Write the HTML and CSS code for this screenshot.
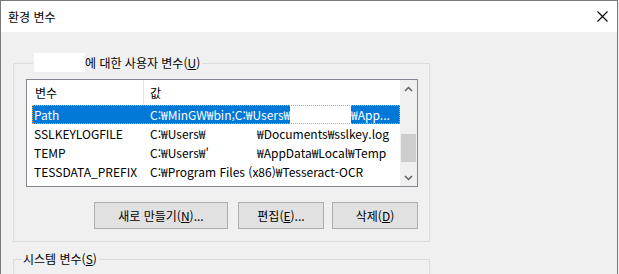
FILE: index.html
```html
<!DOCTYPE html>
<html lang="ko">
<head>
  <meta charset="UTF-8" />
  <title>환경 변수</title>
  <link rel="stylesheet" href="styles.css">
</head>
<body>

<div class="window">
  <div class="titlebar">
    <span class="title">환경 변수</span>
    <svg class="close" width="11" height="11" viewBox="0 0 11 11">
      <path d="M0.5 0.5L10.5 10.5M10.5 0.5L0.5 10.5" stroke="#000" stroke-width="1.1" fill="none"/>
    </svg>
  </div>

  <div class="content">
    <!-- 사용자 변수 -->
    <div class="group user">
      <div class="group-title"><span class="redact"></span><span>에 대한 사용자 변수(<u>U</u>)</span></div>

      <div class="listbox">
        <div class="list">
          <div class="list-head">
            <div class="head-name">변수</div>
            <div class="head-value">값</div>
          </div>
          <div class="row selected">
            <div class="name">Path</div>
            <div class="value fill"><span>C:₩MinGW₩bin;C:₩Users₩</span><span class="redact-row"></span><span class="tail">₩App...</span></div>
          </div>
          <div class="row">
            <div class="name">SSLKEYLOGFILE</div>
            <div class="value"><span class="part">C:₩Users₩</span><span>₩Documents₩sslkey.log</span></div>
          </div>
          <div class="row">
            <div class="name">TEMP</div>
            <div class="value"><span class="part">C:₩Users₩'</span><span>₩AppData₩Local₩Temp</span></div>
          </div>
          <div class="row">
            <div class="name">TESSDATA_PREFIX</div>
            <div class="value">C:₩Program Files (x86)₩Tesseract-OCR</div>
          </div>
        </div>
        <div class="scrollbar">
          <div class="sb-btn">
            <svg width="9" height="6" viewBox="0 0 9 6"><path d="M1 5L4.5 1.5L8 5" stroke="#606060" stroke-width="1.5" fill="none"/></svg>
          </div>
          <div class="sb-track"><div class="sb-thumb"></div></div>
          <div class="sb-btn">
            <svg width="9" height="6" viewBox="0 0 9 6"><path d="M1 1L4.5 4.5L8 1" stroke="#606060" stroke-width="1.5" fill="none"/></svg>
          </div>
        </div>
      </div>

      <div class="buttons">
        <button class="btn wide">새로 만들기(<u>N</u>)...</button>
        <button class="btn edit">편집(<u>E</u>)...</button>
        <button class="btn del">삭제(<u>D</u>)</button>
      </div>
    </div>

    <!-- 시스템 변수 -->
    <div class="group system">
      <div class="group-title"><span>시스템 변수(<u>S</u>)</span></div>
    </div>
  </div>
</div>

</body>
</html>
```

FILE: styles.css
```css
html, body { margin: 0; }
body { background: #f0f0f0; font-family: "Noto Sans CJK KR", "Noto Sans", sans-serif; font-size: 12px; color: #000; }

.window { width: 618px; height: 274px; box-sizing: border-box; border: 1px solid #7a7a7a; border-bottom: none;
          background: #f0f0f0; overflow: hidden; }
.titlebar { height: 31px; background: #fff; display: flex; align-items: center; justify-content: space-between;
            padding: 0 9px 0 7px; }
.title { font-size: 12px; }
.close { display: block; }

.content { padding: 31px 0 0 12px; }

.group { width: 417px; box-sizing: border-box; border: 1px solid #dcdcdc; }
.user { padding: 0 11px 12px 12px; }
.group-title { display: flex; align-items: center; width: fit-content; height: 19px; line-height: 19px;
               margin: -11px 0 0 7px; padding: 0 2px 0 1px; background: #f0f0f0; }
.redact { width: 51px; height: 19px; background: #fff; }

.listbox { display: flex; height: 108px; box-sizing: border-box; margin-top: 7px; border: 1px solid #828790; background: #fff; }
.list { flex: 1; overflow: hidden; }
.list-head { display: flex; height: 25px; align-items: center; }
.head-name { width: 108px; padding-left: 8px; height: 100%; line-height: 25px; border-right: 1px solid #e5e5e5; }
.head-value { padding-left: 6px; }

.row { display: flex; align-items: center; height: 19px; margin-left: 5px; white-space: nowrap; }
.row .name { width: 116px; padding-left: 2px; box-sizing: border-box; flex-shrink: 0; }
.row .value { display: flex; align-items: center; padding-left: 2px; }
.row .value.fill { flex: 1; }
.row .part { display: inline-block; width: 107px; overflow: hidden; }
.redact-row { flex: 1; height: 19px; background: #fff; }
.row .tail { width: 49px; flex-shrink: 0; }
.row.selected { background: #0078d7; color: #fff; outline: 1px dotted #f5a23a; outline-offset: -1px; }

.scrollbar { width: 17px; display: flex; flex-direction: column; background: #f0f0f0; }
.sb-btn { height: 17px; display: flex; align-items: center; justify-content: center; }
.sb-track { flex: 1; }
.sb-thumb { margin: 37px 1px 0; height: 28px; background: #cdcdcd; }

.buttons { display: flex; justify-content: flex-end; margin-top: 15px; }
.btn { height: 27px; padding: 0; border: 1px solid #adadad; background: #e1e1e1; font-family: inherit; font-size: 12px; color: #000; }
.btn.wide { width: 134px; }
.btn.edit { width: 86px; margin-left: 10px; }
.btn.del { width: 86px; margin-left: 8px; }

.system { height: 40px; margin-top: 17px; }
.system .group-title { margin-left: 8px; }
```
